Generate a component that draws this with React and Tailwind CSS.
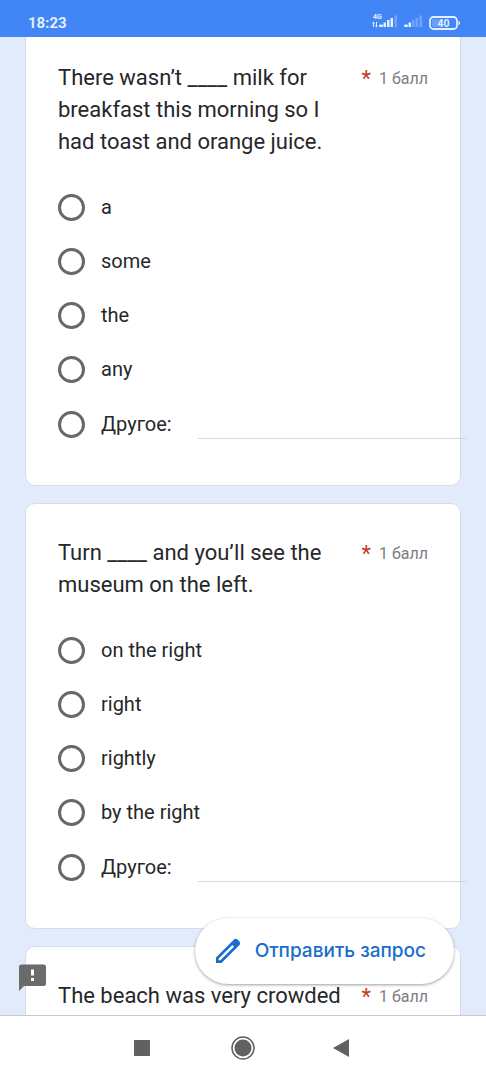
const questions = [
  {
    id: "milk",
    title: "There wasn’t ____ milk for breakfast this morning so I had toast and orange juice.",
    options: ["a", "some", "the", "any"],
    scrolled: true,
  },
  {
    id: "museum",
    title: "Turn ____ and you’ll see the museum on the left.",
    options: ["on the right", "right", "rightly", "by the right"],
  },
  {
    id: "beach",
    title: "The beach was very crowded",
    options: [],
  },
];

const radioClass =
  "size-[27px] shrink-0 appearance-none rounded-full border-[3px] border-[#686868] bg-white checked:border-8 checked:border-[#1a73e8]";

function StatusBar() {
  return (
    <header className="flex h-[37px] shrink-0 items-end justify-between bg-[#4285f4] pr-6 pb-1 pl-7 text-[#e3f0ff]">
      <span className="text-[15px] leading-5 font-bold">18:23</span>
      <svg width="90" height="20" viewBox="0 0 90 20" fill="currentColor" aria-hidden="true">
        {/* first sim */}
        <text x="1" y="5.500" fontSize="7" fontWeight="700">4G</text>
        <path d="M1.500 9v5M4.500 9v5" stroke="currentColor" strokeWidth="1" />
        <path d="M0 10.500l1.500-2 1.500 2zM3 12.500l1.500 2 1.500-2z" />
        <rect x="7" y="11.500" width="4" height="2.500" rx="1" />
        <rect x="11.500" y="9.500" width="2.500" height="4.500" />
        <rect x="15" y="7" width="2.500" height="7" />
        <rect x="18.500" y="5" width="2.500" height="9" />
        <rect x="22.500" y="2.500" width="2.500" height="11.500" opacity="0.300" />
        {/* second sim */}
        <rect x="32" y="11.500" width="4" height="2.500" rx="1" />
        <rect x="36.500" y="9.500" width="2.500" height="4.500" />
        <rect x="40" y="7" width="2.500" height="7" opacity="0.300" />
        <rect x="43.500" y="5" width="2.500" height="9" opacity="0.300" />
        <rect x="47.500" y="2.500" width="2.500" height="11.500" opacity="0.300" />
        {/* battery */}
        <rect x="58" y="4" width="27" height="12" rx="3.500" fill="none" stroke="currentColor" strokeWidth="1.800" />
        <rect x="60" y="6" width="9" height="8" rx="1" opacity="0.250" />
        <path d="M87 8.500q1 1.500 0 3z" stroke="currentColor" />
        <text x="71.500" y="13.700" fontSize="10.500" fontWeight="700" textAnchor="middle">40</text>
      </svg>
    </header>
  );
}

function Question({ id, title, options, scrolled }) {
  return (
    <fieldset
      className={
        scrolled
          ? "rounded-b-[10px] border border-t-0 border-[#d5dbe8] bg-white px-8 pt-[25px] pb-[33px]"
          : "rounded-[10px] border border-[#d5dbe8] bg-white px-8 py-[33px]"
      }
    >
      <div className="flex items-start gap-4">
        <h2 id={`${id}-title`} className="flex-1 text-[22px] leading-8 text-[#26272a]">
          {title}
        </h2>
        <div className="flex items-center gap-2 leading-8">
          <span className="text-[22px] text-[#c23a22]">*</span>
          <span className="pt-px text-[16px] text-[#7b7e82]">1 балл</span>
        </div>
      </div>
      {options.length > 0 && (
        <div role="radiogroup" aria-labelledby={`${id}-title`} className="mt-[22px]">
          {options.map((option) => (
            <label key={option} className="flex h-[54px] items-center gap-4 text-[20px] text-[#26272a]">
              <input type="radio" name={id} value={option} className={radioClass} />
              {option}
            </label>
          ))}
          <div className="flex h-14 items-center">
            <label className="flex items-center gap-4 text-[20px] text-[#26272a]">
              <input type="radio" name={id} value="other" className={radioClass} />
              Другое:
            </label>
            <input
              type="text"
              aria-label="Другое"
              className="-mr-[39px] ml-[26px] h-[43px] min-w-0 flex-1 self-start border-b border-[#d5d9dd] text-[20px] outline-none"
            />
          </div>
        </div>
      )}
    </fieldset>
  );
}

function NavBar() {
  return (
    <nav className="flex h-[65px] shrink-0 items-center justify-center gap-[77px] border-t border-[#c9cbd0] bg-white text-[#616161]">
      <button aria-label="Recent apps">
        <svg width="24" height="24" viewBox="0 0 24 24" fill="currentColor">
          <rect x="4" y="4" width="16" height="16" />
        </svg>
      </button>
      <button aria-label="Home">
        <svg width="24" height="24" viewBox="0 0 24 24" fill="currentColor">
          <circle cx="12" cy="12" r="11" fill="none" stroke="currentColor" strokeWidth="1.500" />
          <circle cx="12" cy="12" r="8.500" />
        </svg>
      </button>
      <button aria-label="Back">
        <svg width="24" height="24" viewBox="0 0 24 24" fill="currentColor">
          <path d="M17 3v18L1 12z" />
        </svg>
      </button>
    </nav>
  );
}

export default function App() {
  return (
    <div className="flex h-screen flex-col bg-[#e2ebfc] font-['Roboto',sans-serif]">
      <StatusBar />
      <div className="relative min-h-0 flex-1 overflow-hidden">
        <form className="flex flex-col gap-[17px] px-[25px]">
          {questions.map((q) => (
            <Question key={q.id} {...q} />
          ))}
        </form>

        <button aria-label="Report a problem" className="absolute bottom-6 left-[19px] text-[#6b6b6b]">
          <svg width="27" height="27" viewBox="0 0 27 27" fill="currentColor">
            <path d="M2.500 0.500H24.500Q27 0.500 27 3V19.500Q27 22 24.500 22H5L0 27V3Q0 0.500 2.500 0.500Z" />
            <path d="M12 5.500h3v6h-3zM12 14h3v3h-3z" fill="#fff" />
          </svg>
        </button>

        <button className="absolute right-8 bottom-[31px] flex h-[66px] items-center gap-3 rounded-full bg-white pr-7 pl-[18px] font-['Inter','Roboto',sans-serif] text-[19px] font-medium text-[#1a6dcc] shadow-[0_1px_3px_rgba(60,64,67,0.5)]">
          <svg width="30" height="30" viewBox="0 0 30 30" fill="currentColor" aria-hidden="true">
            <path
              fillRule="evenodd"
              d="M3 27v-5.500L20.500 4Q22.500 2 24.500 3.500L26.500 5.500Q28 7.500 26 9.500L8.500 27zM5.700 24.300h1.700L21 10.700 19.300 9 5.700 22.600z"
            />
          </svg>
          Отправить запрос
        </button>
      </div>
      <NavBar />
    </div>
  );
}
